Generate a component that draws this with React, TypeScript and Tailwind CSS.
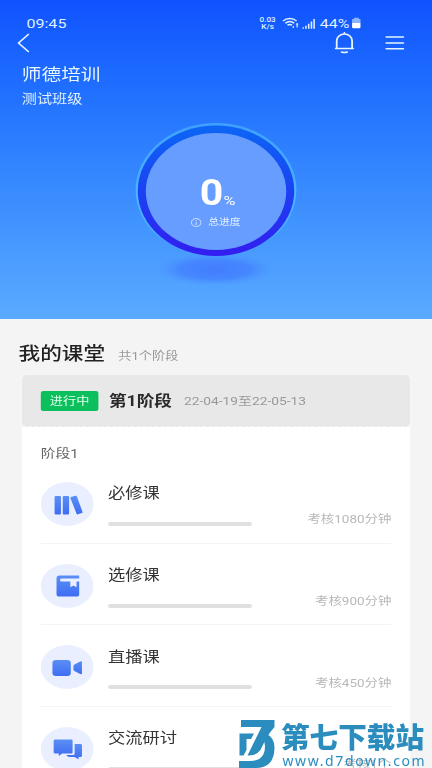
import React from "react";

const FONT = "font-['Roboto','Noto_Sans_CJK_SC',sans-serif]";

function StatusBar() {
  return (
    <div className="flex h-[16px] items-center pl-[22px] pr-[59px] text-white">
      <span className="pt-[2px] text-[13.4px] leading-none text-[#dff0ff]">09:45</span>
      <div className="ml-auto flex items-center">
        <div className="flex w-[16px] flex-col items-center pt-[2px] text-[6.8px] font-medium leading-[7px] text-[#dff0ff]">
          <span>0.03</span>
          <span>K/s</span>
        </div>
        <svg className="ml-[4px] h-[12px] w-[14px]" viewBox="0 0 14 12" fill="none" stroke="#dff0ff" strokeWidth="1.3">
          <path d="M.8 4.2C3.8 .6 9.2 .6 12.2 4.2M2.8 6.3C5 3.9 8 3.9 10.2 6.3M4.6 8.3c1.1-1.1 2.7-1.1 3.8 0" />
          <path d="M9.4 9v2M12.6 6.5v4" strokeWidth="1" />
          <path d="M11.3 7.6 12.6 6l1.3 1.6z" fill="#dff0ff" stroke="none" />
        </svg>
        <svg className="ml-[3px] h-[11px] w-[11px]" viewBox="0 0 11 11" fill="#dff0ff">
          <path d="M0 9.2h1.3v1.5H0zM2.3 7.7h1.3v3H2.3zM4.6 5.7h1.3v5H4.6zM6.9 3.5h1.3v7.2H6.9zM9.1 1h1.3v9.7H9.1z" />
        </svg>
        <span className="ml-[3.5px] w-[25.5px] whitespace-nowrap pt-[1px] text-[13.3px] leading-none text-[#dff0ff]">44%</span>
        <svg className="ml-[1px] h-[12px] w-[8px]" viewBox="0 0 8 12">
          <path d="M2 .8h4V2h1.4v4H.4V2H2z" fill="#8bb4ff" />
          <path d="M.4 6h7v4.2q0 1-1 1h-5q-1 0-1-1z" fill="#fff" />
        </svg>
      </div>
    </div>
  );
}

function NavBar() {
  return (
    <div className="flex h-[24px] items-center pl-[14px] pr-[23px]">
      <svg className="h-[20px] w-[11px]" viewBox="0 0 11 20" fill="none" stroke="#e6f4ff" strokeWidth="1.4">
        <path d="M10 1 1.4 10l8.6 9" />
      </svg>
      <svg className="ml-auto h-[24px] w-[18px]" viewBox="0 0 18 24" fill="none" stroke="#e6f4ff" strokeWidth="1.5" strokeLinecap="round">
        <path d="M2.6 17.2V9.8a6.4 6.8 0 0 1 12.8 0v7.4M1.7 17.5h14.6M9 1.8v1.2M6.6 21q2.4 1 4.8 0" />
      </svg>
      <svg className="ml-[25.5px] h-[16px] w-[16px]" viewBox="0 0 16 16" stroke="#e6f4ff" strokeWidth="1.6" strokeLinecap="round">
        <path d="M.8 2h14.4M.8 8h14.4M.8 13.8h14.4" />
      </svg>
    </div>
  );
}

function ProgressDial() {
  return (
    <div className="relative mx-auto mt-[10px] h-[172px] w-[160px]">
      <svg className="h-full w-full" viewBox="100 118 160 172" fill="none">
        <defs>
          <linearGradient id="ring" x1="0" y1="0" x2="0" y2="1">
            <stop offset="0" stopColor="#0c66f5" />
            <stop offset=".5" stopColor="#1b42f2" />
            <stop offset="1" stopColor="#331df0" />
          </linearGradient>
          <linearGradient id="edge" x1="0" y1="0" x2="0" y2="1">
            <stop offset="0" stopColor="#3fa0ff" />
            <stop offset=".5" stopColor="#49b4ff" />
            <stop offset=".8" stopColor="#49b4ff" stopOpacity=".9" />
            <stop offset=".9" stopColor="#49b4ff" stopOpacity="0" />
          </linearGradient>
          <radialGradient id="shadow">
            <stop offset="0" stopColor="#437dff" />
            <stop offset=".6" stopColor="#437fff" stopOpacity=".75" />
            <stop offset="1" stopColor="#4a90ff" stopOpacity="0" />
          </radialGradient>
        </defs>
        <ellipse cx="179" cy="269.5" rx="49" ry="16" fill="url(#shadow)" />
        <circle cx="180" cy="190" r="67" fill="url(#edge)" />
        <circle cx="180" cy="190.7" r="65.2" fill="url(#ring)" />
        <circle cx="180" cy="191.5" r="58.5" fill="#669dff" />
      </svg>
      <div className="absolute inset-x-0 top-[57px] flex flex-col items-center text-white">
        <div className="flex items-baseline pl-[2px] leading-[36px]">
          <span className="w-[20px] text-center text-[36px] font-bold">
            <span className="inline-block scale-x-95">0</span>
          </span>
          <span className="ml-[0.5px] text-[13.5px]">%</span>
        </div>
        <div className="-mt-[3px] flex h-[14px] items-center text-[#e3efff]">
          <svg className="h-[9px] w-[9px]" viewBox="0 0 9 9" fill="none" stroke="#dbe9ff" strokeWidth=".8">
            <circle cx="4.5" cy="4.5" r="4" />
            <path d="M4.5 2v1M4.5 4v3" />
          </svg>
          <span className="ml-[5px] text-[9px] leading-none">总进度</span>
        </div>
      </div>
    </div>
  );
}

const books = (
  <>
    <rect x="11.5" y="14" width="5.3" height="18.5" rx="1" />
    <rect x="18.3" y="14" width="5.3" height="18.5" rx="1" />
    <path d="m25.2 15 3.6-1.3q.9-.3 1.2.6l4.8 15.6q.3.9-.6 1.2l-3.2 1.2q-.9.3-1.2-.6l-5.1-15.4q-.3-.9.5-1.3z" />
  </>
);
const notebook = (
  <path d="M15.8 11.5H32v2.9H17.2q-1.2 0-1.2 1.5t1.2 1.5h7.4v5.8l2.6-1.8 2.6 1.8v-5.8H32v12.8q0 2.3-2.3 2.3H15.4q-2.3 0-2.3-2.3V14.2q0-2.7 2.7-2.7z" />
);
const camera = (
  <>
    <rect x="9.7" y="15" width="15.3" height="16" rx="3" />
    <path d="M27.2 21q0-1 .8-1.6l4.8-3q1.5-.8 1.5.8v11q0 1.6-1.5.8L28 26q-.8-.6-.8-1.6z" />
  </>
);
const chat = (
  <>
    <path d="M28.2 17h4.8q1.3 0 1.3 1.3v10.4q0 1.3-1.3 1.3h-1.5v2.3L28 30h-3q-3 0-3.6-2h5.3q1.5 0 1.5-1.5z" />
    <path d="M12 12.5h13.2q1.3 0 1.3 1.3v11.4q0 1.3-1.3 1.3h-7.4l-2.8 2.4v-2.4h-3q-1.3 0-1.3-1.3V13.8q0-1.3 1.3-1.3z" />
  </>
);

const courses = [
  { name: "必修课", note: "考核1080分钟", icon: books },
  { name: "选修课", note: "考核900分钟", icon: notebook },
  { name: "直播课", note: "考核450分钟", icon: camera },
  { name: "交流研讨", note: "考核1个", icon: chat },
];

function CourseRow({ name, note, icon }: { name: string; note: string; icon: React.ReactNode }) {
  return (
    <div className="flex h-[81.6px] shrink-0 border-b border-[#f4f4f4]">
      <svg className="mt-[20px] h-[44px] w-[44px]" viewBox="0 0 44 44" fill="url(#glyph)">
        <circle cx="22" cy="22" r="22" fill="#e9efff" />
        {icon}
      </svg>
      <div className="ml-[12px] mt-[21.4px] w-[120px]">
        <div className="whitespace-nowrap text-[14.4px] leading-[22px] text-[#333]">{name}</div>
        <div className="mt-[16.6px] h-[4px] rounded-full bg-[#e0e0e0]" />
      </div>
      <div className="ml-auto mt-[49.4px] whitespace-nowrap text-[11.2px] leading-[18px] text-[#b8b8b8]">{note}</div>
    </div>
  );
}

function Watermark() {
  return (
    <div className="absolute left-[238px] top-[718px] flex h-[50px] w-[194px] text-[#2b8cbe]">
      <svg className="mt-[2px] h-[48px] w-[38px] shrink-0" viewBox="238 720 38 48" fill="#2b8cbe">
        <path d="M241 720h33.500v7q-8 9-12 19-3.500 9.500-13.500 9.500h-1.500L261.500 727H241z" />
        <path d="M239.500 733.500H254l-3 5.500h-4.500v11l-3 5.500h-4z" />
        <path d="M267 734q7.500 4 7.500 13.500 0 20.500-19 20.500h-16.500v-7h11q15 0 15-15 0-4-2-6.500z" />
      </svg>
      <div className="ml-[5px] mt-[3px] w-[145px] whitespace-nowrap">
        <div className="font-['Noto_Sans_CJK_SC',sans-serif] text-[28.6px] font-black leading-[30px]">第七下载站</div>
        <div className="ml-[1.5px] mt-[1px] font-['Noto_Sans',sans-serif] text-[14px] leading-[18px] tracking-[1.6px]">www.d7down.com</div>
      </div>
    </div>
  );
}

export default function App() {
  return (
    <div className={`relative h-[768px] w-[432px] overflow-hidden bg-[#f4f4f4] ${FONT}`}>
      <svg className="absolute h-0 w-0">
        <defs>
          <linearGradient id="glyph" x1="0" y1="0" x2="0" y2="1">
            <stop offset="0" stopColor="#5b8ff5" />
            <stop offset="1" stopColor="#3f6df2" />
          </linearGradient>
        </defs>
      </svg>
      <div className="flex h-[768px] w-[360px] origin-left scale-x-120 flex-col overflow-hidden">
        <header className="h-[319px] shrink-0 bg-linear-to-b from-[#1152ff] to-[#5aabff] pt-[15px]">
          <StatusBar />
          <NavBar />
          <h1 className="ml-[18.2px] mt-[7.5px] text-[16.4px] leading-[24px] text-[#e9f5ff]">师德培训</h1>
          <p className="ml-[18.2px] mt-[3.5px] text-[12.6px] leading-[18px] text-[#e3f2ff]">测试班级</p>
          <ProgressDial />
        </header>
        <div className="ml-[15.5px] mt-[20px] flex h-[28px] shrink-0 items-center">
          <h2 className="text-[18px] font-medium text-[#222]">我的课堂</h2>
          <span className="ml-[11px] mt-[8px] text-[11px] text-[#999]">共1个阶段</span>
        </div>
        <section className="ml-[18.3px] mt-[8px] w-[323.5px] bg-white">
          <div className="flex h-[52px] items-center bg-[#f4f4f4]">
            <div className="flex h-full w-full items-center rounded-[5px] border-b border-dashed border-[#f4f4f4] bg-[#e8e8e8] pl-[15.7px]">
              <span className="flex h-[20px] w-[48px] items-center justify-center rounded-[2px] bg-[#0bbf5d] pt-[2px] text-[11px] leading-none text-[#e4ffee]">进行中</span>
              <span className="ml-[8.8px] mt-[1px] text-[14.7px] font-bold text-[#2b2b2b]">第1阶段</span>
              <span className="ml-[10px] mt-[2px] text-[11.5px] text-[#999]">22-04-19至22-05-13</span>
            </div>
          </div>
          <div className="flex h-[341px] flex-col overflow-hidden px-[15.7px]">
            <div className="mt-[18px] h-[17px] shrink-0 text-[12.3px] leading-[18px] text-[#666]">阶段1</div>
            {courses.map((c) => (
              <CourseRow key={c.name} {...c} />
            ))}
          </div>
        </section>
      </div>
      <Watermark />
    </div>
  );
}
